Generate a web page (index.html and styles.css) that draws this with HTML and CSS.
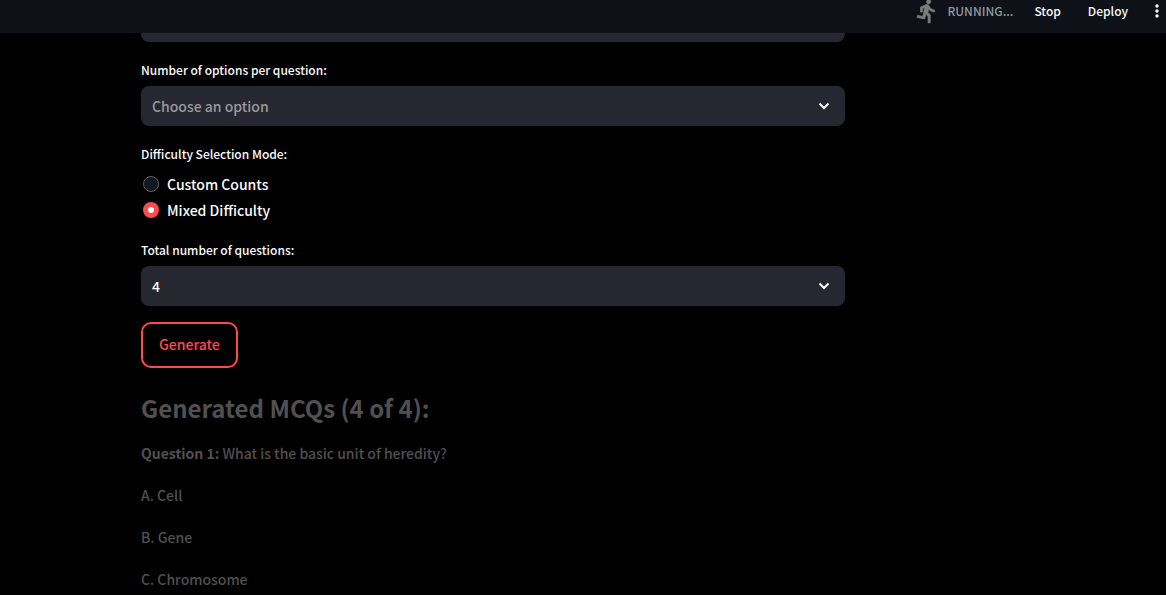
FILE: index.html
```html
<!DOCTYPE html>
<html lang="en">
<head>
<meta charset="utf-8">
<meta name="viewport" content="width=device-width, initial-scale=1">
<title>MCQ Generator</title>
<link rel="stylesheet" href="styles.css">
</head>
<body>
<header class="toolbar">
  <div class="status">
    <svg class="runner" viewBox="0 0 24 24" aria-hidden="true"><path d="M13.49 5.48c1.1 0 2-.9 2-2s-.9-2-2-2-2 .9-2 2 .9 2 2 2zm-3.6 13.9l1-4.4 2.1 2v6h2v-7.5l-2.1-2 .6-3c1.3 1.5 3.3 2.5 5.5 2.5v-2c-1.900 0-3.500-1-4.300-2.400l-1-1.600c-.4-.6-1-1-1.700-1-.3 0-.5.1-.8.1l-5.200 2.200v4.700h2v-3.400l1.800-.7-1.600 8.100-4.900-1-.4 2 7 1.400z"/></svg>
    <span>RUNNING...</span>
  </div>
  <button class="tool" type="button">Stop</button>
  <button class="tool" type="button">Deploy</button>
  <button class="more" type="button" aria-label="Main menu">
    <svg viewBox="0 0 4 14" aria-hidden="true"><circle cx="2" cy="2" r="1.7"/><circle cx="2" cy="7" r="1.7"/><circle cx="2" cy="12" r="1.7"/></svg>
  </button>
</header>
<main class="page">
  <form class="form">
    <div class="picker picker-scrolled">
      <select class="select" aria-label="Topic"><option></option></select>
    </div>
    <div class="field">
      <label class="label" for="options">Number of options per question:</label>
      <div class="picker">
        <select class="select select-empty" id="options"><option>Choose an option</option></select>
        <svg class="chevron" viewBox="0 0 12 8" aria-hidden="true"><path d="M1.500 1.500 6 6l4.500-4.500"/></svg>
      </div>
    </div>
    <fieldset class="field modes">
      <legend class="label">Difficulty Selection Mode:</legend>
      <label class="mode"><input class="radio" type="radio" name="mode">Custom Counts</label>
      <label class="mode"><input class="radio" type="radio" name="mode" checked>Mixed Difficulty</label>
    </fieldset>
    <div class="field">
      <label class="label" for="total">Total number of questions:</label>
      <div class="picker">
        <select class="select" id="total"><option>4</option></select>
        <svg class="chevron" viewBox="0 0 12 8" aria-hidden="true"><path d="M1.500 1.500 6 6l4.500-4.500"/></svg>
      </div>
    </div>
    <button class="generate" type="button">Generate</button>
  </form>
  <section class="results">
    <h2 class="title">Generated MCQs (4 of 4):</h2>
    <p class="line"><strong>Question 1:</strong> What is the basic unit of heredity?</p>
    <p class="line">A. Cell</p>
    <p class="line">B. Gene</p>
    <p class="line">C. Chromosome</p>
  </section>
</main>
</body>
</html>
```
FILE: styles.css
```css
* { box-sizing: border-box; }
body {
  margin: 0;
  height: 100vh;
  display: flex;
  flex-direction: column;
  overflow: hidden;
  background: #000;
  color: #fafafa;
  font: 500 14px/24px "Noto Sans CJK SC", "Noto Sans", sans-serif;
}
button, select { font: inherit; color: inherit; }
.toolbar {
  flex: none;
  height: 33px;
  display: flex;
  justify-content: flex-end;
  align-items: flex-start;
  padding-right: 7px;
  background: #0e1117;
  font-size: 12px;
  line-height: 22px;
  overflow: hidden;
}
.status {
  display: flex;
  gap: 7px;
  margin-right: 21px;
  color: #9397a1;
}
.runner {
  width: 26px;
  height: 26px;
  margin-top: -2px;
  fill: #7c7c7e;
  stroke: #7c7c7e;
  stroke-width: 0.6;
}
.tool { border: 0; padding: 0; margin-right: 27px; background: none; }
.more { border: 0; padding: 4px 0 0; background: none; display: flex; }
.more svg { width: 4px; height: 14px; fill: #fafafa; }
.page {
  flex: 1;
  min-height: 0;
  overflow: hidden;
  padding: 0 16px 0 141px;
}
.form, .results { max-width: 704px; }
.label { display: block; padding: 0; margin-bottom: 4px; font-size: 12px; }
.field { margin: 0 0 16px; padding: 0; border: 0; }
.picker { display: grid; align-items: center; }
.picker-scrolled { margin: -31px 0 16px; }
.select {
  grid-area: 1 / 1;
  width: 100%;
  height: 40px;
  padding: 0 11px;
  border: 0;
  border-radius: 8px;
  appearance: none;
  background: #262730;
}
.select-empty { color: #98989d; }
.chevron {
  grid-area: 1 / 1;
  justify-self: end;
  width: 12px;
  height: 8px;
  margin-right: 15px;
  fill: none;
  stroke: #fafafa;
  stroke-width: 2;
  pointer-events: none;
}
.modes .label { margin-bottom: 5px; }
.modes { margin-bottom: 15px; }
.mode { display: flex; align-items: center; gap: 8px; height: 26px; padding-left: 2px; }
.radio {
  appearance: none;
  flex: none;
  width: 16px;
  height: 16px;
  margin: 0;
  border: 1px solid #606164;
  border-radius: 50%;
  background: #131720;
}
.radio:checked { border: 5px solid #ff4b4b; background: #fff; }
.generate {
  height: 46px;
  padding: 0 16px 2px;
  border: 2px solid #ff4b4b;
  border-radius: 10px;
  background: #000;
  color: #ff4b4b;
}
.results { color: #505050; }
.title { margin: 22px 0 15px; font-size: 24px; line-height: 36px; font-weight: 700; }
.line { margin: 0 0 18px; }
```
